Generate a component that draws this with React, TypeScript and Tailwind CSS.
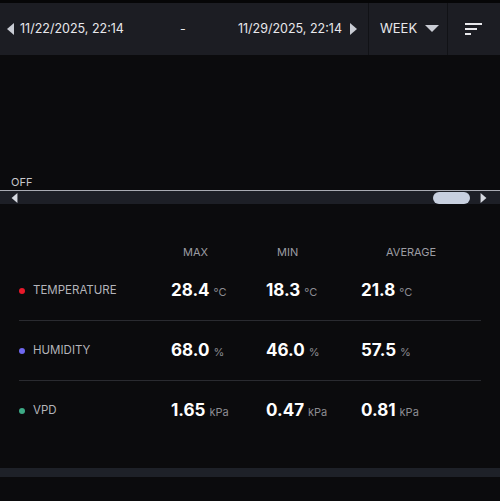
const font = { fontFamily: 'Inter, "Noto Sans", sans-serif' }

const rows = [
  { name: 'TEMPERATURE', dot: 'bg-[#e8192a]', values: ['28.4', '18.3', '21.8'], unit: '°C' },
  { name: 'HUMIDITY', dot: 'bg-[#6f68f0]', values: ['68.0', '46.0', '57.5'], unit: '%' },
  { name: 'VPD', dot: 'bg-[#3daa85]', values: ['1.65', '0.47', '0.81'], unit: 'kPa' },
]

function TriLeft({ className }: { className?: string }) {
  return (
    <svg width="7" height="12" viewBox="0 0 7 12" className={className}>
      <path d="M7 0 L0 6 L7 12 Z" fill="currentColor" />
    </svg>
  )
}

function TriRight({ className }: { className?: string }) {
  return (
    <svg width="7" height="12" viewBox="0 0 7 12" className={className}>
      <path d="M0 0 L7 6 L0 12 Z" fill="currentColor" />
    </svg>
  )
}

export default function App() {
  return (
    <div className="w-[500px] h-[501px] bg-[#0b0b0d] overflow-hidden text-white flex flex-col" style={font}>
      <div className="h-[3px] bg-[#060607]" />
      <header className="h-[52px] bg-[#1c1d23] flex items-stretch whitespace-nowrap">
        <div className="w-[368px] flex items-center pl-[7px] pr-[11px] text-[12.5px] text-[#e8e8ec]">
          <TriLeft className="text-[#c9ccd4]" />
          <span className="ml-[6px]">11/22/2025, 22:14</span>
          <span className="ml-[56px]">-</span>
          <span className="ml-auto">11/29/2025, 22:14</span>
          <TriRight className="ml-[8px] text-[#c9ccd4]" />
        </div>
        <div className="w-px bg-[#111216]" />
        <div className="w-[78px] flex items-center pl-[11px] text-[13px] text-[#e8e8ec]">
          <span>WEEK</span>
          <svg width="14" height="8" viewBox="0 0 14 8" className="ml-[8px] text-[#c9ccd4]">
            <path d="M0 0 H14 L7 7 Z" fill="currentColor" />
          </svg>
        </div>
        <div className="w-px bg-[#111216]" />
        <div className="flex-1 flex items-center justify-center">
          <svg width="18" height="13" viewBox="0 0 18 13" className="text-[#e8e8ec]">
            <rect x="0" y="0" width="17" height="2" fill="currentColor" />
            <rect x="0" y="5" width="12" height="2" fill="currentColor" />
            <rect x="0" y="10" width="6" height="2" fill="currentColor" />
          </svg>
        </div>
      </header>

      <div className="h-[119px]" />
      <div className="pl-[11px] text-[11px] leading-[16px] text-[#c8c8cc]">OFF</div>
      <div className="h-px bg-[#a9abb3]" />
      <div className="h-[13px] bg-[#1d1f26] flex items-center pl-[11px] pr-[13px]">
        <TriLeft className="text-[#d6d9e0] h-[10px]" />
        <div className="ml-auto w-[37px] h-[12px] rounded-full bg-[#c8d0df]" />
        <TriRight className="ml-[10px] text-[#d6d9e0] h-[10px]" />
      </div>

      <div className="px-[19px] mt-[38px]">
        <div className="flex text-[11px] text-[#9c9ca2] h-[20px] items-center">
          <div className="w-[152px]" />
          <div className="w-[95px] pl-[12px]">MAX</div>
          <div className="w-[95px] pl-[11px]">MIN</div>
          <div className="w-[95px] pl-[25px]">AVERAGE</div>
        </div>
        <div className="-mt-px">
          {rows.map((r, i) => (
            <div
              key={r.name}
              className={`flex items-center h-[60px] ${i < rows.length - 1 ? 'border-b border-[#2a2b30]' : ''}`}
            >
              <div className="w-[152px] flex items-center">
                <span className={`w-[6px] h-[6px] rounded-full ${r.dot}`} />
                <span className="ml-[8px] text-[11.5px] text-[#b4b4ba]">{r.name}</span>
              </div>
              {r.values.map(v => (
                <div key={v} className="w-[95px] flex items-baseline">
                  <span className="text-[17px] font-bold text-white">{v}</span>
                  <span className="ml-[4px] text-[11px] text-[#8c8c92]">{r.unit}</span>
                </div>
              ))}
            </div>
          ))}
        </div>
      </div>

      <div className="mt-auto mb-[24px] h-[9px] bg-[#1e2128]" />
    </div>
  )
}
